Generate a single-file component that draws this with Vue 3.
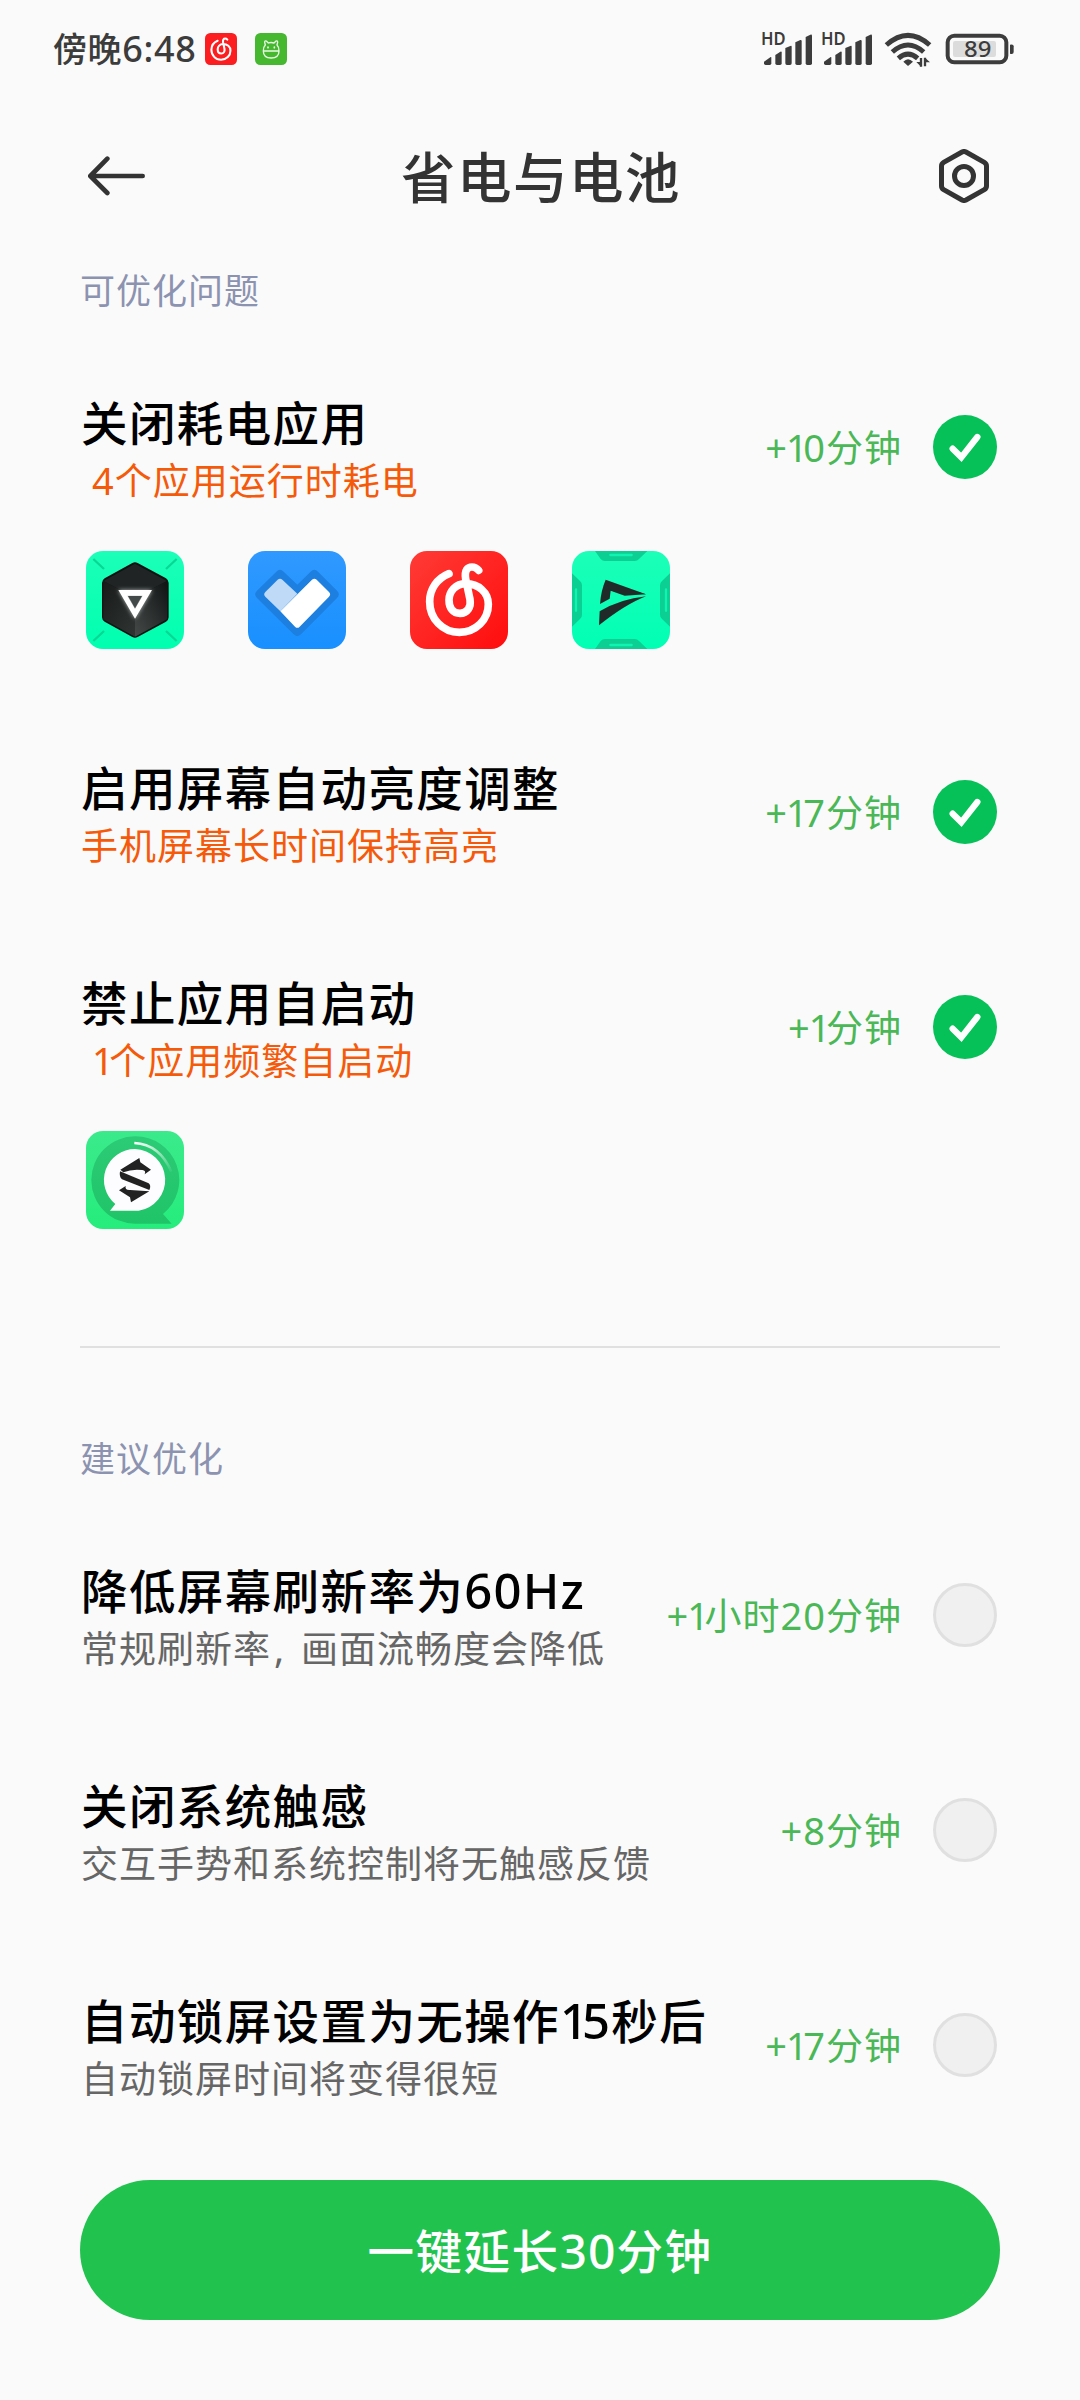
<script setup>
// Splits a label into CJK runs, Latin glyphs and the narrow digit 1.
const split = (text) => (text.match(/1|, |[+\dA-Za-z:]|[^+\dA-Za-z:,]+/g) || []).map((t, i, all) => ({
  t,
  c: t === '1' ? 'latin one' : t === ', ' ? 'latin comma' : t === '+' && all[i + 1] === '1' ? 'latin plus' : /^[+\dA-Za-z:]/.test(t) ? 'latin' : '',
}))
const problems = [
  { title: '关闭耗电应用', sub: '4个应用运行时耗电', lead: true, gain: '+10分钟', apps: ['cube', 'heart', 'music', 'arrow'] },
  { title: '启用屏幕自动亮度调整', sub: '手机屏幕长时间保持高亮', gain: '+17分钟' },
  { title: '禁止应用自启动', sub: '1个应用频繁自启动', lead: true, gain: '+1分钟', apps: ['chat'] },
]
const suggestions = [
  { title: '降低屏幕刷新率为60Hz', sub: '常规刷新率, 画面流畅度会降低', gain: '+1小时20分钟' },
  { title: '关闭系统触感', sub: '交互手势和系统控制将无触感反馈', gain: '+8分钟' },
  { title: '自动锁屏设置为无操作15秒后', sub: '自动锁屏时间将变得很短', gain: '+17分钟' },
]
const groups = [
  { name: '可优化问题', rows: problems, on: true },
  { name: '建议优化', rows: suggestions, on: false },
]
const swirl = 'M117 68C80 83 59 115 59 152C59 203 98 244 148 244C198 244 235 206 235 160C235 124 205 98 167 98C137 98 117 122 117 147C117 172 130 187 150 187C172 187 184 168 180 145L167 84C163 58 172 48 186 48C196 48 201 52 206 58'
</script>

<template>
  <div class="screen">
    <header class="status">
      <span class="clock">傍晚<span class="latin">6:48</span></span>
      <svg class="mini" viewBox="0 0 96 96">
        <rect width="96" height="96" rx="16" fill="#fb1d1f" />
        <path :d="swirl" transform="translate(0 1) scale(.325)" fill="none" stroke="#fff" stroke-width="19" stroke-linecap="round" />
      </svg>
      <svg class="mini second" viewBox="0 0 96 96">
        <rect width="96" height="96" rx="16" fill="#46b830" />
        <g fill="none" stroke="#e9f9e4" stroke-width="4" stroke-linecap="round" stroke-linejoin="round">
          <path d="M25 54H72C72 68 62 75 48.500 75S25 68 25 54Q24 43 31 36L29 28Q29 22 34 24L40 30Q48 27 57 30L63 24Q68 22 68 28L66 36Q73 43 72 54" />
          <path d="M39 42V44M58 42V44" stroke-width="5" />
        </g>
      </svg>
      <div class="indicators">
        <svg v-for="n in 2" :key="n" class="signal" viewBox="30 0 159 138">
          <text x="33" y="74" font-size="51" font-weight="600" textLength="74" lengthAdjust="spacingAndGlyphs" fill="#3c3c3c">HD</text>
          <g fill="#3c3c3c">
            <path d="M42 130V125L62 111Q64 110 64 113V130Q64 135 59 135H47Q42 135 42 130Z" />
            <path d="M76 105L91 95Q95 93 95 97V130Q95 135 90 135H81Q76 135 76 130Z" />
            <path d="M106 84L121 78Q125 76 125 80V130Q125 135 120 135H111Q106 135 106 130Z" />
            <path d="M136 67L151 60Q155 59 155 63V130Q155 135 150 135H141Q136 135 136 130Z" />
            <path d="M167 51L181 44Q186 42 186 47V130Q186 135 181 135H172Q167 135 167 130Z" />
          </g>
        </svg>
        <svg class="wifi" viewBox="402 36 144 108">
          <g fill="none" stroke="#3c3c3c" stroke-width="15">
            <path d="M409 75Q474 17 539 75" />
            <path d="M427 96Q474 54 521 96" />
            <path d="M445 115Q474 90 503 115" />
          </g>
          <path d="M474 138L460 125Q474 110 489 125Z" fill="#3c3c3c" />
          <path d="M513 114V140M525 139V113" fill="none" stroke="#3c3c3c" stroke-width="7" />
          <path d="M499 126H513V140ZM525 113V127H540Z" fill="#3c3c3c" />
        </svg>
        <svg class="battery" viewBox="585 36 210 102">
          <rect x="593" y="47" width="176" height="80" rx="20" fill="none" stroke="#3c3c3c" stroke-width="12" />
          <rect x="609" y="63" width="129" height="48" rx="6" fill="#dcdcdc" />
          <path d="M780 74Q791 71 791 79V96Q791 104 780 101Z" fill="#3c3c3c" />
          <text x="642" y="112" font-size="66" font-weight="500" textLength="82" lengthAdjust="spacingAndGlyphs" fill="#3c3c3c">89</text>
        </svg>
      </div>
    </header>

    <nav class="bar">
      <svg class="back" viewBox="0 0 171 120" fill="none" stroke="#333" stroke-width="14" stroke-linecap="round" stroke-linejoin="round">
        <path d="M58 8L7 60L58 111M9 60H164" />
      </svg>
      <h1>省电与电池</h1>
      <svg class="gear" viewBox="0 0 150 162" fill="none" stroke="#333" stroke-width="15">
        <path d="M69 9Q75 6 81 9L136 40Q142.500 44 142.500 51V111Q142.500 118 136 122L81 153Q75 156 69 153L14 122Q7.500 118 7.500 111V51Q7.500 44 14 40Z" />
        <circle cx="75" cy="81" r="28.500" />
      </svg>
    </nav>

    <main>
      <section v-for="g in groups" :key="g.name" class="group">
        <h2>{{ g.name }}</h2>
        <article v-for="(r, i) in g.rows" :key="i" class="item">
          <div class="row">
            <div class="copy">
              <p class="title"><span v-for="(s, k) in split(r.title)" :key="k" :class="s.c">{{ s.t }}</span></p>
              <p class="sub" :class="{ warn: g.on, lead: r.lead }"><span v-for="(s, k) in split(r.sub)" :key="k" :class="s.c">{{ s.t }}</span></p>
            </div>
            <div class="action">
              <span class="gain"><span v-for="(s, k) in split(r.gain)" :key="k" :class="s.c">{{ s.t }}</span></span>
              <span class="check" :class="{ on: g.on }">
                <svg v-if="g.on" viewBox="0 0 192 192"><path d="M59 101L85 127L133 66" fill="none" stroke="#fff" stroke-width="19" stroke-linecap="round" /></svg>
              </span>
            </div>
          </div>
          <div v-if="r.apps" class="apps">
            <span v-for="a in r.apps" :key="a" class="app" :class="a">
              <svg v-if="a === 'cube'" viewBox="0 0 294 294">
                <defs>
                  <linearGradient id="cubeL" x1="0" y1="0" x2="1" y2="1"><stop offset="0" stop-color="#171a19" /><stop offset="1" stop-color="#303534" /></linearGradient>
                  <linearGradient id="cubeR" x1="0" y1="1" x2="1" y2="0"><stop offset="0" stop-color="#454a49" /><stop offset="1" stop-color="#101313" /></linearGradient>
                  <filter id="glow" x="-30%" y="-30%" width="160%" height="160%"><feGaussianBlur stdDeviation="6" /></filter>
                </defs>
                <path d="M22 24L54 54M272 24L240 54M22 270L54 240M272 270L240 240" stroke="#08d893" stroke-width="7" />
                <path d="M139 36Q147 31 155 36L240 82Q248 87 248 96V199Q248 207 240 212L155 258Q147 263 139 258L56 212Q48 207 48 199V96Q48 87 56 82Z" fill="#0e1111" />
                <path d="M147 38L243 90L147 140L52 90Z" fill="#202424" />
                <path d="M52 90L147 140V257L52 205Z" fill="url(#cubeL)" />
                <path d="M243 90L147 140V257L243 205Z" fill="url(#cubeR)" />
                <path d="M97 117H198L147 203Z" fill="#aeb4b3" filter="url(#glow)" />
                <path d="M97 117H198L147 203ZM124 134L147 174L170 134Z" fill="#fff" fill-rule="evenodd" />
                <path d="M126 135H168L147 172Z" fill="#434948" />
              </svg>
              <svg v-else-if="a === 'heart'" viewBox="0 0 294 294">
                <path d="M85 62Q96 51 107 62L148 101L188 62Q199 51 210 62L267 119Q278 130 267 141L159 250Q148 261 137 250L27 141Q16 130 27 119Z" fill="#1d7fdf" />
                <path d="M89 86Q96 80 103 86L148 128L97 181L52 137Q45 130 52 123Z" fill="#bedaf7" />
                <path d="M192 86Q199 80 206 86L243 123Q250 130 243 137L155 227Q148 234 141 227L97 181Z" fill="#fff" />
              </svg>
              <svg v-else-if="a === 'music'" viewBox="0 0 294 294">
                <path :d="swirl" fill="none" stroke="#fff" stroke-width="23" stroke-linecap="round" stroke-linejoin="round" />
              </svg>
              <svg v-else-if="a === 'arrow'" viewBox="0 0 294 294">
                <path d="M69 0L86 24Q91 30 99 30H188Q196 30 201 24L226 0ZM69 294L86 270Q91 264 99 264H188Q196 264 201 270L226 294ZM0 67L24 90Q30 95 30 103V191Q30 199 24 204L0 227ZM294 67L270 90Q264 95 264 103V191Q264 199 270 204L294 227Z" fill="#0bcf93" />
                <path d="M115 12H179M115 282H179M12 115V179M282 115V179" stroke="#11f3b0" stroke-width="7" stroke-linecap="round" />
                <path d="M101 86L222 130Q170 128 116 119L113 143L84 159Q87 118 101 86Z" fill="#202a28" />
                <path d="M116 119L158 134L222 130L101 96Z" fill="#202a28" />
                <path d="M222 136Q160 160 81 223L83 181Q145 144 222 136Z" fill="#202a28" />
              </svg>
              <svg v-else viewBox="0 0 294 294">
                <defs>
                  <linearGradient id="ring" x1="0" y1="0" x2="0" y2="1"><stop offset="0" stop-color="#2ccb76" /><stop offset="1" stop-color="#20c468" /></linearGradient>
                  <linearGradient id="shine" x1="0" y1="0" x2="1" y2="1"><stop offset="0" stop-color="#fff" /><stop offset="1" stop-color="#fff" stop-opacity=".05" /></linearGradient>
                </defs>
                <path d="M147 16A131 131 0 1 0 147 278H257L231 249A131 131 0 0 0 147 16Z" fill="url(#ring)" />
                <path d="M145 36Q221 40 256 122" fill="none" stroke="url(#shine)" stroke-width="8" />
                <path d="M147 54A93 93 0 0 1 158 239H72L88 219A93 93 0 0 1 147 54Z" fill="#fdfdff" />
                <g fill="#222">
                  <path d="M103 116L160 81L163 94L195 116L176 130Q181 118 169 117Q138 113 112 124Z" />
                  <path d="M102 121L188 157Q196 164 190 177L108 145Q99 139 102 121Z" />
                  <path d="M99 178L119 165Q116 178 132 177L190 181L135 214L132 199Z" />
                </g>
              </svg>
            </span>
          </div>
        </article>
      </section>
    </main>
    <button class="extend">一键延长<span class="latin">30</span>分钟</button>
  </div>
</template>

<style>
body { margin: 0; background: #fafafa; }
</style>

<style scoped>
.screen { display: flex; flex-direction: column; width: 1080px; height: 2400px; box-sizing: border-box; background: #fafafa; font-family: "Noto Sans CJK SC", sans-serif; overflow: hidden; }
h1, h2, p { margin: 0; font-weight: 400; }
svg { display: block; flex: none; }
p, h1, h2, .gain, .clock { white-space: pre; }
.latin { font-family: "Noto Sans", sans-serif; line-height: 0; letter-spacing: 1px; }
.comma { margin: 0 5px 0 3px; }

.status { display: flex; align-items: flex-start; height: 98px; padding: 0 65px 0 53px; }
.clock { width: 152px; line-height: 96px; font-size: 34px; letter-spacing: .6px; font-weight: 500; color: #3c3c3c; }
.clock .latin { font-size: 36px; letter-spacing: .7px; }
.mini { width: 32px; height: 32px; margin-top: 33px; }
.second { margin-left: 18px; }
.indicators { display: flex; margin: 32px 0 0 auto; font-family: "Noto Sans", sans-serif; }
.signal { width: 53px; height: 46px; margin: -12px 7px 0 0; }
.wifi { width: 48px; height: 36px; margin: 0 13px 0 4px; }
.battery { width: 70px; height: 34px; }

.bar { display: flex; align-items: center; justify-content: space-between; height: 156px; padding: 0 91px 0 88px; }
.back { width: 57px; height: 40px; }
.bar h1 { font-size: 54.5px; line-height: 80px; margin: -2px 2px 0 0; letter-spacing: 1.5px; font-weight: 500; color: #333; }
.gear { width: 50px; height: 54px; }

main { display: flex; flex-direction: column; height: 1926px; padding: 0 80px; }
.group:first-child { flex: none; height: 1092px; border-bottom: 2px solid #e0e0e0; }
h2 { height: 70px; line-height: 70px; margin-bottom: 70px; font-size: 35px; letter-spacing: 1px; color: #8c93b0; }
.group + .group h2 { margin: 74px 0 70px; }
.item { margin-bottom: 99px; }
.row { display: flex; justify-content: space-between; height: 116px; }
.copy { padding-left: 1px; }
.title { height: 56px; line-height: 53px; font-size: 46.5px; letter-spacing: 1.4px; font-weight: 500; color: #000; }
.title .latin { font-size: 49px; letter-spacing: 1.2px; }
.sub { height: 58px; line-height: 58px; font-size: 37px; letter-spacing: 1px; color: #666; }
.sub.warn { color: #f55a0b; }
.sub.lead { padding-left: 11px; }
.sub .latin { font-size: 38px; }
.action { display: flex; align-items: center; height: 106px; gap: 31px; padding-right: 3px; }
.gain { margin-top: -3px; font-size: 37px; letter-spacing: 1px; color: #4ab856; }
.gain .latin { font-size: 38px; }
.latin.plus { letter-spacing: -1px; }
.latin.one { letter-spacing: -4.5px; }
.title .latin.one { letter-spacing: -6px; }
.check { width: 64px; height: 64px; box-sizing: border-box; border: 3px solid #e0e0e0; border-radius: 50%; background: #f0f0f0; }
.check.on { border: 0; background: #05c158; }
.apps { display: flex; gap: 64px; padding: 41px 6px 11px; }
.app { width: 98px; height: 98px; border-radius: 17px; overflow: hidden; }
.cube { background: linear-gradient(#1cffb8, #00ffb0); }
.heart { background: linear-gradient(#3099ff, #1890ff); }
.music { background: linear-gradient(135deg, #ff3b36, #ff0d0d); }
.arrow { background: linear-gradient(#1cffb8, #00ffb4); }
.chat { background: linear-gradient(#3bea8b, #25ed7c); }

.extend { width: 920px; height: 140px; margin: 0 80px; padding: 0 0 3px; border: 0; border-radius: 70px; background: #22c24e; color: #fff; font-family: "Noto Sans CJK SC", sans-serif; font-size: 46.5px; font-weight: 500; letter-spacing: 1.5px; }
.extend .latin { font-size: 48px; }
</style>
